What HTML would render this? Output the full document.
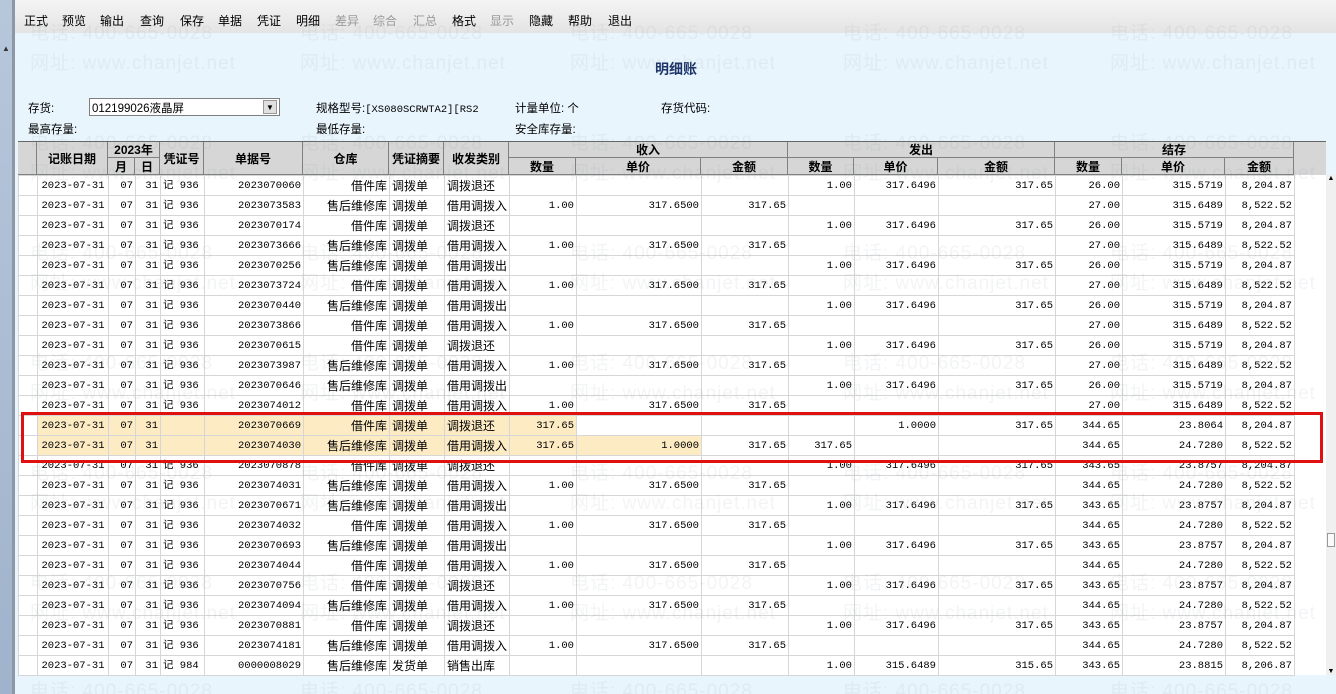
<!DOCTYPE html>
<html><head><meta charset="utf-8"><style>
*{margin:0;padding:0;box-sizing:border-box}
html,body{width:1336px;height:694px;overflow:hidden}
body{background:#e9f5fd;font-family:"Liberation Sans","Noto Sans CJK SC",sans-serif;font-size:12px;color:#000;position:relative}
.a{position:absolute}
#left{left:0;top:0;width:12px;height:694px;background:linear-gradient(#b7c7db,#9fb3cc)}
#lbar{left:12px;top:0;width:3px;height:694px;background:#8c98a6}
#menu{left:15px;top:0;width:1321px;height:33px;background:linear-gradient(#f4f4f4,#e4e4e4)}
.m{position:absolute;top:12px;font-size:12px}
.g{color:#9a9a9a}
#title{left:655px;top:59px;font-size:14px;font-weight:bold;color:#1c3468}
.lab{position:absolute;font-size:11.5px}
#combo{left:89px;top:98px;width:191px;height:18px;background:#fff;border:1px solid #7f7f7f}
#hd{left:18px;top:141px;width:1308px;height:34px;background:#d6d6d6;border-top:1px solid #666}
.h{position:absolute;font-weight:bold;font-size:12px;text-align:center;border-right:1px solid #808080;border-bottom:1px solid #808080;display:flex;align-items:center;justify-content:center}
table{position:absolute;left:18px;top:175px;width:1276px;border-collapse:collapse;table-layout:fixed;background:#fff}
td{height:20px;border:1px solid #d6d6d6;font-family:"Liberation Mono","Noto Sans CJK SC",monospace;font-size:10.5px;white-space:nowrap;overflow:hidden;padding:0 2px;text-align:right;line-height:18px}
td.c{font-family:"Liberation Sans","Noto Sans CJK SC",sans-serif;font-size:12px}
td.l{text-align:left}
td.m2{text-align:center}
tr.y td.k{background:#fdebc3}
#bodyr{left:1294px;top:175px;width:32px;height:500px;background:#fff}
#sb{left:1326px;top:175px;width:10px;height:500px;background:#f0f0f0}
#red{left:21px;top:412px;width:1302px;height:51px;border:3px solid #e01010}
.wm{position:absolute;font-size:19px;color:rgba(120,130,140,0.09);white-space:nowrap;pointer-events:none;letter-spacing:1px}
</style></head><body>
<div class="a" id="left"></div><div class="a" id="lbar"></div>
<div class="a" style="left:2px;top:44px;font-size:8px;color:#333">▲</div>
<div class="a" id="menu"></div>
<div class="m" style="left:24px">正式</div><div class="m" style="left:62px">预览</div><div class="m" style="left:100px">输出</div><div class="m" style="left:140px">查询</div><div class="m" style="left:180px">保存</div><div class="m" style="left:218px">单据</div><div class="m" style="left:257px">凭证</div><div class="m" style="left:296px">明细</div><div class="m g" style="left:335px">差异</div><div class="m g" style="left:373px">综合</div><div class="m g" style="left:413px">汇总</div><div class="m" style="left:452px">格式</div><div class="m g" style="left:490px">显示</div><div class="m" style="left:529px">隐藏</div><div class="m" style="left:568px">帮助</div><div class="m" style="left:608px">退出</div>
<div class="a" id="title">明细账</div>
<div class="lab" style="left:28px;top:100px">存货:</div>
<div class="a" id="combo"><span style="position:absolute;left:2px;top:1px;font-size:11.5px">012199026液晶屏</span><span style="position:absolute;right:2px;top:1px;width:14px;height:14px;background:#e0e0e0;border:1px solid #999;font-size:8px;text-align:center;line-height:13px">▼</span></div>
<div class="lab" style="left:316px;top:100px">规格型号:<span style="font-family:'Liberation Mono',monospace;font-size:10.5px">[XS080SCRWTA2][RS2</span></div>
<div class="lab" style="left:515px;top:100px">计量单位: 个</div>
<div class="lab" style="left:661px;top:100px">存货代码:</div>
<div class="lab" style="left:28px;top:121px">最高存量:</div>
<div class="lab" style="left:316px;top:121px">最低存量:</div>
<div class="lab" style="left:515px;top:121px">安全库存量:</div>
<div class="a" id="hd">
<div class="h" style="left:0;top:0;width:19px;height:33px"></div>
<div class="h" style="left:19px;top:0;width:71px;height:33px">记账日期</div>
<div class="h" style="left:90px;top:0;width:52px;height:16px">2023年</div>
<div class="h" style="left:90px;top:16px;width:27px;height:17px">月</div>
<div class="h" style="left:117px;top:16px;width:25px;height:17px">日</div>
<div class="h" style="left:142px;top:0;width:44px;height:33px">凭证号</div>
<div class="h" style="left:186px;top:0;width:99px;height:33px">单据号</div>
<div class="h" style="left:285px;top:0;width:86px;height:33px">仓库</div>
<div class="h" style="left:371px;top:0;width:55px;height:33px">凭证摘要</div>
<div class="h" style="left:426px;top:0;width:65px;height:33px">收发类别</div>
<div class="h" style="left:491px;top:0;width:279px;height:16px">收入</div>
<div class="h" style="left:491px;top:16px;width:67px;height:17px">数量</div>
<div class="h" style="left:558px;top:16px;width:125px;height:17px">单价</div>
<div class="h" style="left:683px;top:16px;width:87px;height:17px">金额</div>
<div class="h" style="left:770px;top:0;width:267px;height:16px">发出</div>
<div class="h" style="left:770px;top:16px;width:66px;height:17px">数量</div>
<div class="h" style="left:836px;top:16px;width:84px;height:17px">单价</div>
<div class="h" style="left:920px;top:16px;width:117px;height:17px">金额</div>
<div class="h" style="left:1037px;top:0;width:239px;height:16px">结存</div>
<div class="h" style="left:1037px;top:16px;width:67px;height:17px">数量</div>
<div class="h" style="left:1104px;top:16px;width:103px;height:17px">单价</div>
<div class="h" style="left:1207px;top:16px;width:69px;height:17px">金额</div>
</div>
<div class="a" id="bodyr"></div>
<div class="a" id="sb"><div style="font-size:7px;text-align:center">▲</div><div style="position:absolute;top:358px;left:1px;width:8px;height:14px;border:1px solid #999;background:#fafafa"></div><div style="position:absolute;bottom:0;width:10px;font-size:7px;text-align:center">▼</div></div>
<table>
<colgroup><col style="width:19px"><col style="width:71px"><col style="width:27px"><col style="width:25px"><col style="width:44px"><col style="width:99px"><col style="width:86px"><col style="width:55px"><col style="width:65px"><col style="width:67px"><col style="width:125px"><col style="width:87px"><col style="width:66px"><col style="width:84px"><col style="width:117px"><col style="width:67px"><col style="width:103px"><col style="width:69px"></colgroup>
<tr><td></td><td class="m2">2023-07-31</td><td>07</td><td>31</td><td class="l">记 936</td><td>2023070060</td><td class="c">借件库</td><td class="c l">调拨单</td><td class="c l">调拨退还</td><td></td><td></td><td></td><td>1.00</td><td>317.6496</td><td>317.65</td><td>26.00</td><td>315.5719</td><td>8,204.87</td></tr>
<tr><td></td><td class="m2">2023-07-31</td><td>07</td><td>31</td><td class="l">记 936</td><td>2023073583</td><td class="c">售后维修库</td><td class="c l">调拨单</td><td class="c l">借用调拨入</td><td>1.00</td><td>317.6500</td><td>317.65</td><td></td><td></td><td></td><td>27.00</td><td>315.6489</td><td>8,522.52</td></tr>
<tr><td></td><td class="m2">2023-07-31</td><td>07</td><td>31</td><td class="l">记 936</td><td>2023070174</td><td class="c">借件库</td><td class="c l">调拨单</td><td class="c l">调拨退还</td><td></td><td></td><td></td><td>1.00</td><td>317.6496</td><td>317.65</td><td>26.00</td><td>315.5719</td><td>8,204.87</td></tr>
<tr><td></td><td class="m2">2023-07-31</td><td>07</td><td>31</td><td class="l">记 936</td><td>2023073666</td><td class="c">售后维修库</td><td class="c l">调拨单</td><td class="c l">借用调拨入</td><td>1.00</td><td>317.6500</td><td>317.65</td><td></td><td></td><td></td><td>27.00</td><td>315.6489</td><td>8,522.52</td></tr>
<tr><td></td><td class="m2">2023-07-31</td><td>07</td><td>31</td><td class="l">记 936</td><td>2023070256</td><td class="c">售后维修库</td><td class="c l">调拨单</td><td class="c l">借用调拨出</td><td></td><td></td><td></td><td>1.00</td><td>317.6496</td><td>317.65</td><td>26.00</td><td>315.5719</td><td>8,204.87</td></tr>
<tr><td></td><td class="m2">2023-07-31</td><td>07</td><td>31</td><td class="l">记 936</td><td>2023073724</td><td class="c">借件库</td><td class="c l">调拨单</td><td class="c l">借用调拨入</td><td>1.00</td><td>317.6500</td><td>317.65</td><td></td><td></td><td></td><td>27.00</td><td>315.6489</td><td>8,522.52</td></tr>
<tr><td></td><td class="m2">2023-07-31</td><td>07</td><td>31</td><td class="l">记 936</td><td>2023070440</td><td class="c">售后维修库</td><td class="c l">调拨单</td><td class="c l">借用调拨出</td><td></td><td></td><td></td><td>1.00</td><td>317.6496</td><td>317.65</td><td>26.00</td><td>315.5719</td><td>8,204.87</td></tr>
<tr><td></td><td class="m2">2023-07-31</td><td>07</td><td>31</td><td class="l">记 936</td><td>2023073866</td><td class="c">借件库</td><td class="c l">调拨单</td><td class="c l">借用调拨入</td><td>1.00</td><td>317.6500</td><td>317.65</td><td></td><td></td><td></td><td>27.00</td><td>315.6489</td><td>8,522.52</td></tr>
<tr><td></td><td class="m2">2023-07-31</td><td>07</td><td>31</td><td class="l">记 936</td><td>2023070615</td><td class="c">借件库</td><td class="c l">调拨单</td><td class="c l">调拨退还</td><td></td><td></td><td></td><td>1.00</td><td>317.6496</td><td>317.65</td><td>26.00</td><td>315.5719</td><td>8,204.87</td></tr>
<tr><td></td><td class="m2">2023-07-31</td><td>07</td><td>31</td><td class="l">记 936</td><td>2023073987</td><td class="c">售后维修库</td><td class="c l">调拨单</td><td class="c l">借用调拨入</td><td>1.00</td><td>317.6500</td><td>317.65</td><td></td><td></td><td></td><td>27.00</td><td>315.6489</td><td>8,522.52</td></tr>
<tr><td></td><td class="m2">2023-07-31</td><td>07</td><td>31</td><td class="l">记 936</td><td>2023070646</td><td class="c">售后维修库</td><td class="c l">调拨单</td><td class="c l">借用调拨出</td><td></td><td></td><td></td><td>1.00</td><td>317.6496</td><td>317.65</td><td>26.00</td><td>315.5719</td><td>8,204.87</td></tr>
<tr><td></td><td class="m2">2023-07-31</td><td>07</td><td>31</td><td class="l">记 936</td><td>2023074012</td><td class="c">借件库</td><td class="c l">调拨单</td><td class="c l">借用调拨入</td><td>1.00</td><td>317.6500</td><td>317.65</td><td></td><td></td><td></td><td>27.00</td><td>315.6489</td><td>8,522.52</td></tr>
<tr class="y"><td></td><td class="m2 k">2023-07-31</td><td class="k">07</td><td class="k">31</td><td class="k"></td><td class="k">2023070669</td><td class="c k">借件库</td><td class="c l k">调拨单</td><td class="c l k">调拨退还</td><td class="k">317.65</td><td></td><td></td><td></td><td>1.0000</td><td>317.65</td><td>344.65</td><td>23.8064</td><td>8,204.87</td></tr>
<tr class="y"><td></td><td class="m2 k">2023-07-31</td><td class="k">07</td><td class="k">31</td><td class="k"></td><td class="k">2023074030</td><td class="c k">售后维修库</td><td class="c l k">调拨单</td><td class="c l k">借用调拨入</td><td class="k">317.65</td><td class="k">1.0000</td><td>317.65</td><td>317.65</td><td></td><td></td><td>344.65</td><td>24.7280</td><td>8,522.52</td></tr>
<tr><td></td><td class="m2">2023-07-31</td><td>07</td><td>31</td><td class="l">记 936</td><td>2023070878</td><td class="c">借件库</td><td class="c l">调拨单</td><td class="c l">调拨退还</td><td></td><td></td><td></td><td>1.00</td><td>317.6496</td><td>317.65</td><td>343.65</td><td>23.8757</td><td>8,204.87</td></tr>
<tr><td></td><td class="m2">2023-07-31</td><td>07</td><td>31</td><td class="l">记 936</td><td>2023074031</td><td class="c">售后维修库</td><td class="c l">调拨单</td><td class="c l">借用调拨入</td><td>1.00</td><td>317.6500</td><td>317.65</td><td></td><td></td><td></td><td>344.65</td><td>24.7280</td><td>8,522.52</td></tr>
<tr><td></td><td class="m2">2023-07-31</td><td>07</td><td>31</td><td class="l">记 936</td><td>2023070671</td><td class="c">售后维修库</td><td class="c l">调拨单</td><td class="c l">借用调拨出</td><td></td><td></td><td></td><td>1.00</td><td>317.6496</td><td>317.65</td><td>343.65</td><td>23.8757</td><td>8,204.87</td></tr>
<tr><td></td><td class="m2">2023-07-31</td><td>07</td><td>31</td><td class="l">记 936</td><td>2023074032</td><td class="c">借件库</td><td class="c l">调拨单</td><td class="c l">借用调拨入</td><td>1.00</td><td>317.6500</td><td>317.65</td><td></td><td></td><td></td><td>344.65</td><td>24.7280</td><td>8,522.52</td></tr>
<tr><td></td><td class="m2">2023-07-31</td><td>07</td><td>31</td><td class="l">记 936</td><td>2023070693</td><td class="c">售后维修库</td><td class="c l">调拨单</td><td class="c l">借用调拨出</td><td></td><td></td><td></td><td>1.00</td><td>317.6496</td><td>317.65</td><td>343.65</td><td>23.8757</td><td>8,204.87</td></tr>
<tr><td></td><td class="m2">2023-07-31</td><td>07</td><td>31</td><td class="l">记 936</td><td>2023074044</td><td class="c">借件库</td><td class="c l">调拨单</td><td class="c l">借用调拨入</td><td>1.00</td><td>317.6500</td><td>317.65</td><td></td><td></td><td></td><td>344.65</td><td>24.7280</td><td>8,522.52</td></tr>
<tr><td></td><td class="m2">2023-07-31</td><td>07</td><td>31</td><td class="l">记 936</td><td>2023070756</td><td class="c">借件库</td><td class="c l">调拨单</td><td class="c l">调拨退还</td><td></td><td></td><td></td><td>1.00</td><td>317.6496</td><td>317.65</td><td>343.65</td><td>23.8757</td><td>8,204.87</td></tr>
<tr><td></td><td class="m2">2023-07-31</td><td>07</td><td>31</td><td class="l">记 936</td><td>2023074094</td><td class="c">售后维修库</td><td class="c l">调拨单</td><td class="c l">借用调拨入</td><td>1.00</td><td>317.6500</td><td>317.65</td><td></td><td></td><td></td><td>344.65</td><td>24.7280</td><td>8,522.52</td></tr>
<tr><td></td><td class="m2">2023-07-31</td><td>07</td><td>31</td><td class="l">记 936</td><td>2023070881</td><td class="c">借件库</td><td class="c l">调拨单</td><td class="c l">调拨退还</td><td></td><td></td><td></td><td>1.00</td><td>317.6496</td><td>317.65</td><td>343.65</td><td>23.8757</td><td>8,204.87</td></tr>
<tr><td></td><td class="m2">2023-07-31</td><td>07</td><td>31</td><td class="l">记 936</td><td>2023074181</td><td class="c">售后维修库</td><td class="c l">调拨单</td><td class="c l">借用调拨入</td><td>1.00</td><td>317.6500</td><td>317.65</td><td></td><td></td><td></td><td>344.65</td><td>24.7280</td><td>8,522.52</td></tr>
<tr><td></td><td class="m2">2023-07-31</td><td>07</td><td>31</td><td class="l">记 984</td><td>0000008029</td><td class="c">售后维修库</td><td class="c l">发货单</td><td class="c l">销售出库</td><td></td><td></td><td></td><td>1.00</td><td>315.6489</td><td>315.65</td><td>343.65</td><td>23.8815</td><td>8,206.87</td></tr>
</table>
<div class="a" id="red"></div>
<div class="wm" style="left:30px;top:18px">电话: 400-665-0028</div><div class="wm" style="left:30px;top:48px">网址: www.chanjet.net</div>
<div class="wm" style="left:300px;top:18px">电话: 400-665-0028</div><div class="wm" style="left:300px;top:48px">网址: www.chanjet.net</div>
<div class="wm" style="left:570px;top:18px">电话: 400-665-0028</div><div class="wm" style="left:570px;top:48px">网址: www.chanjet.net</div>
<div class="wm" style="left:843px;top:18px">电话: 400-665-0028</div><div class="wm" style="left:843px;top:48px">网址: www.chanjet.net</div>
<div class="wm" style="left:1110px;top:18px">电话: 400-665-0028</div><div class="wm" style="left:1110px;top:48px">网址: www.chanjet.net</div>
<div class="wm" style="left:30px;top:128px">电话: 400-665-0028</div><div class="wm" style="left:30px;top:158px">网址: www.chanjet.net</div>
<div class="wm" style="left:300px;top:128px">电话: 400-665-0028</div><div class="wm" style="left:300px;top:158px">网址: www.chanjet.net</div>
<div class="wm" style="left:570px;top:128px">电话: 400-665-0028</div><div class="wm" style="left:570px;top:158px">网址: www.chanjet.net</div>
<div class="wm" style="left:843px;top:128px">电话: 400-665-0028</div><div class="wm" style="left:843px;top:158px">网址: www.chanjet.net</div>
<div class="wm" style="left:1110px;top:128px">电话: 400-665-0028</div><div class="wm" style="left:1110px;top:158px">网址: www.chanjet.net</div>
<div class="wm" style="left:30px;top:238px">电话: 400-665-0028</div><div class="wm" style="left:30px;top:268px">网址: www.chanjet.net</div>
<div class="wm" style="left:300px;top:238px">电话: 400-665-0028</div><div class="wm" style="left:300px;top:268px">网址: www.chanjet.net</div>
<div class="wm" style="left:570px;top:238px">电话: 400-665-0028</div><div class="wm" style="left:570px;top:268px">网址: www.chanjet.net</div>
<div class="wm" style="left:843px;top:238px">电话: 400-665-0028</div><div class="wm" style="left:843px;top:268px">网址: www.chanjet.net</div>
<div class="wm" style="left:1110px;top:238px">电话: 400-665-0028</div><div class="wm" style="left:1110px;top:268px">网址: www.chanjet.net</div>
<div class="wm" style="left:30px;top:348px">电话: 400-665-0028</div><div class="wm" style="left:30px;top:378px">网址: www.chanjet.net</div>
<div class="wm" style="left:300px;top:348px">电话: 400-665-0028</div><div class="wm" style="left:300px;top:378px">网址: www.chanjet.net</div>
<div class="wm" style="left:570px;top:348px">电话: 400-665-0028</div><div class="wm" style="left:570px;top:378px">网址: www.chanjet.net</div>
<div class="wm" style="left:843px;top:348px">电话: 400-665-0028</div><div class="wm" style="left:843px;top:378px">网址: www.chanjet.net</div>
<div class="wm" style="left:1110px;top:348px">电话: 400-665-0028</div><div class="wm" style="left:1110px;top:378px">网址: www.chanjet.net</div>
<div class="wm" style="left:30px;top:458px">电话: 400-665-0028</div><div class="wm" style="left:30px;top:488px">网址: www.chanjet.net</div>
<div class="wm" style="left:300px;top:458px">电话: 400-665-0028</div><div class="wm" style="left:300px;top:488px">网址: www.chanjet.net</div>
<div class="wm" style="left:570px;top:458px">电话: 400-665-0028</div><div class="wm" style="left:570px;top:488px">网址: www.chanjet.net</div>
<div class="wm" style="left:843px;top:458px">电话: 400-665-0028</div><div class="wm" style="left:843px;top:488px">网址: www.chanjet.net</div>
<div class="wm" style="left:1110px;top:458px">电话: 400-665-0028</div><div class="wm" style="left:1110px;top:488px">网址: www.chanjet.net</div>
<div class="wm" style="left:30px;top:568px">电话: 400-665-0028</div><div class="wm" style="left:30px;top:598px">网址: www.chanjet.net</div>
<div class="wm" style="left:300px;top:568px">电话: 400-665-0028</div><div class="wm" style="left:300px;top:598px">网址: www.chanjet.net</div>
<div class="wm" style="left:570px;top:568px">电话: 400-665-0028</div><div class="wm" style="left:570px;top:598px">网址: www.chanjet.net</div>
<div class="wm" style="left:843px;top:568px">电话: 400-665-0028</div><div class="wm" style="left:843px;top:598px">网址: www.chanjet.net</div>
<div class="wm" style="left:1110px;top:568px">电话: 400-665-0028</div><div class="wm" style="left:1110px;top:598px">网址: www.chanjet.net</div>
<div class="wm" style="left:30px;top:676px">电话: 400-665-0028</div>
<div class="wm" style="left:300px;top:676px">电话: 400-665-0028</div>
<div class="wm" style="left:570px;top:676px">电话: 400-665-0028</div>
<div class="wm" style="left:843px;top:676px">电话: 400-665-0028</div>
<div class="wm" style="left:1110px;top:676px">电话: 400-665-0028</div>
</body></html>
